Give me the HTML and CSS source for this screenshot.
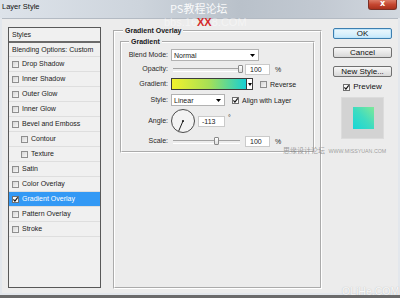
FILE: index.html
```html
<!DOCTYPE html>
<html>
<head>
<meta charset="utf-8">
<title>Layer Style</title>
<link rel="stylesheet" href="styles.css">
</head>
<body>
<div class="window">
  <div class="titlebar">
    <span class="title">Layer Style</span>
    <span class="close">x</span>
  </div>
  <div class="dialog">
    <ul class="styles-list">
      <li class="head">Styles</li>
      <li class="blend">Blending Options: Custom</li>
      <li><span class="cb"></span>Drop Shadow</li>
      <li><span class="cb"></span>Inner Shadow</li>
      <li><span class="cb"></span>Outer Glow</li>
      <li><span class="cb"></span>Inner Glow</li>
      <li><span class="cb"></span>Bevel and Emboss</li>
      <li class="sub"><span class="cb"></span>Contour</li>
      <li class="sub"><span class="cb"></span>Texture</li>
      <li><span class="cb"></span>Satin</li>
      <li><span class="cb"></span>Color Overlay</li>
      <li class="sel"><span class="cb on"><svg width="5" height="5" viewBox="0 0 5 5"><path d="M0.4 2.4 L1.9 4.2 L4.7 0.4" fill="none" stroke="#111" stroke-width="1.1"/></svg></span>Gradient Overlay</li>
      <li><span class="cb"></span>Pattern Overlay</li>
      <li><span class="cb"></span>Stroke</li>
    </ul>

    <fieldset class="group outer">
      <legend>Gradient Overlay</legend>
      <fieldset class="group inner">
        <legend>Gradient</legend>
        <div class="form">
          <label>Blend Mode:</label>
          <div class="ctl">
            <div class="select wide"><span>Normal</span><svg width="5" height="3" viewBox="0 0 5 3"><path d="M0 0H5L2.5 3Z" fill="#000"/></svg></div>
          </div>

          <label>Opacity:</label>
          <div class="ctl">
            <div class="slider"><span class="thumb" style="left:65px"></span></div>
            <div class="num">100</div>
            <span class="unit">%</span>
          </div>

          <label>Gradient:</label>
          <div class="ctl">
            <div class="grad"><div class="grad-fill"></div><div class="grad-drop"><svg width="4" height="3" viewBox="0 0 4 3"><path d="M0 0H4L2 3Z" fill="#000"/></svg></div></div>
            <span class="cb"></span><span class="cb-label">Reverse</span>
          </div>

          <label>Style:</label>
          <div class="ctl">
            <div class="select narrow"><span>Linear</span><svg width="5" height="3" viewBox="0 0 5 3"><path d="M0 0H5L2.5 3Z" fill="#000"/></svg></div>
            <span class="cb on"><svg width="5" height="5" viewBox="0 0 5 5"><path d="M0.4 2.4 L1.9 4.2 L4.7 0.4" fill="none" stroke="#111" stroke-width="1.1"/></svg></span><span class="cb-label">Align with Layer</span>
          </div>

          <label>Angle:</label>
          <div class="ctl">
            <svg class="dial" width="24" height="24" viewBox="0 0 24 24">
              <circle cx="12" cy="12" r="11.5" fill="#f3f3f3" stroke="#4a4a4a"/>
              <line x1="12" y1="12" x2="7.6" y2="22.2" stroke="#222" stroke-width="1"/>
              <circle cx="12" cy="12" r="1" fill="#111"/>
            </svg>
            <div class="num angle">-113</div>
            <span class="deg">°</span>
          </div>

          <label>Scale:</label>
          <div class="ctl">
            <div class="slider"><span class="thumb" style="left:41px"></span></div>
            <div class="num">100</div>
            <span class="unit">%</span>
          </div>
        </div>
      </fieldset>
    </fieldset>

    <div class="side">
      <button class="btn default">OK</button>
      <button class="btn">Cancel</button>
      <button class="btn last">New Style...</button>
      <div class="preview-check"><span class="cb on"><svg width="5" height="5" viewBox="0 0 5 5"><path d="M0.4 2.4 L1.9 4.2 L4.7 0.4" fill="none" stroke="#111" stroke-width="1.1"/></svg></span><span>Preview</span></div>
      <div class="preview-box"><div class="preview-swatch"></div></div>
    </div>
  </div>

  <div class="wm-ps">PS教程论坛</div>
  <div class="wm-bbs">bbs.16<b>XX</b>8.COM</div>
  <div class="wm-missyuan">思缘设计论坛 <span>WWW.MISSYUAN.COM</span></div>
  <div class="wm-olihe">OLiHe.COM</div>
</div>
</body>
</html>
```

FILE: styles.css
```css
* { box-sizing: border-box; }

html, body { margin: 0; padding: 0; }

body {
  width: 400px;
  height: 298px;
  overflow: hidden;
  background: #6b6b6b;
  font-family: "Liberation Sans", Arial, sans-serif;
  font-size: 7px;
  color: #222;
}

.window {
  position: relative;
  width: 400px;
  height: 295px;
  background: #e3e7ec;
  display: flex;
  flex-direction: column;
}

.titlebar {
  height: 18px;
  flex: none;
  display: flex;
  align-items: flex-start;
  background: linear-gradient(90deg, #dde3ea 0%, #cdd4dc 35%, #b9c1ca 60%, #c2c9d2 80%, #d2d8df 100%);
}

.title {
  font-size: 7.5px;
  line-height: 14px;
  padding-left: 2px;
  color: #111;
}

.close {
  margin-left: auto;
  margin-right: 3px;
  width: 29px;
  height: 10px;
  background: linear-gradient(#dc7b66, #c54731 50%, #a9301c);
  border: 1px solid #7a3026;
  border-top: 0;
  border-radius: 0 0 3px 3px;
  color: #fff;
  font: bold 8px/8px "DejaVu Sans", sans-serif;
  text-align: center;
}

.dialog {
  height: 275px;
  flex: none;
  margin: 0 2px 2px;
  background: #ececec;
  border-top: 1px solid #b3bac3;
  display: flex;
  align-items: flex-start;
  padding: 7px 6px 0;
}

/* left list */
.styles-list {
  list-style: none;
  margin: 1px 12px 0 0;
  padding: 0;
  width: 93px;
  height: 261px;
  flex: none;
  border: 1px solid #585858;
  background: #f0f0f0;
}

.styles-list li {
  height: 15px;
  line-height: 14px;
  border-bottom: 1px solid #dedede;
  padding-left: 3px;
  display: flex;
  align-items: center;
  white-space: nowrap;
  color: #222;
}

.styles-list li.head {
  border-bottom: 2px solid #6a6a6a;
}

.styles-list li.blend {
  height: 14px;
  line-height: 13px;
}

.styles-list li.sub { padding-left: 12px; }

.styles-list li.sel {
  background: #3399f5;
  color: #fff;
}

.cb {
  width: 7px;
  height: 7px;
  flex: none;
  border: 1px solid #8e8e8e;
  background: linear-gradient(135deg, #d6d6d6, #f7f7f7);
  margin-right: 3px;
  display: flex;
  align-items: center;
  justify-content: center;
}

.cb.on { background: #fbfbfb; border-color: #6f6f6f; }
.cb svg { display: block; }

/* group boxes */
.group {
  margin: 0;
  min-width: 0;
  border: 2px groove #ffffff;
}

.group legend {
  font-weight: bold;
  line-height: 10px;
  padding: 0 2px;
  color: #1a1a1a;
}

.outer {
  width: 209px;
  height: 263px;
  flex: none;
  margin: 0 11px 0 0;
  padding: 1px 5px 0;
}

.outer > legend { margin-left: 3px; }

.inner {
  width: 195px;
  padding: 0;
}

.inner > legend { margin-left: 7px; }

.form {
  display: grid;
  grid-template-columns: 46px auto;
  grid-template-rows: 12px 12px 14px 14px 24px 12px;
  row-gap: 2px;
  column-gap: 3px;
  padding: 2px 0 4px;
}

.form label {
  text-align: right;
  align-self: center;
  line-height: 8px;
  color: #2a2a2a;
  white-space: nowrap;
}

.ctl {
  display: flex;
  align-items: center;
  white-space: nowrap;
}

.select {
  height: 12px;
  border: 1px solid #b2b2b2;
  background: #fff;
  display: flex;
  align-items: center;
  justify-content: space-between;
  padding: 0 3px 0 2px;
  color: #1a1a1a;
}

.select.wide { width: 88px; }
.select.narrow { width: 54px; margin-right: 7px; }

.slider {
  position: relative;
  width: 67px;
  height: 12px;
  margin: 0 5px 0 2px;
}

.slider::before {
  content: "";
  position: absolute;
  left: 0;
  right: 0;
  top: 5px;
  height: 2px;
  border-top: 1px solid #a3a3a3;
  border-bottom: 1px solid #fff;
}

.thumb {
  position: absolute;
  top: 2px;
  width: 5px;
  height: 8px;
  border: 1px solid #8a8a8a;
  border-radius: 1px;
  background: linear-gradient(#ffffff, #dedede);
}

.num {
  width: 25px;
  height: 11px;
  background: #fff;
  border: 1px solid #cacaca;
  padding-left: 4px;
  line-height: 9px;
  margin-right: 5px;
  color: #1a1a1a;
}

.num.angle {
  width: 27px;
  padding-left: 3px;
  margin-right: 3px;
}

.unit { color: #2a2a2a; }

.deg {
  align-self: flex-start;
  margin-top: 5px;
  line-height: 8px;
}

.dial { display: block; margin-right: 3px; flex: none; }

.grad {
  width: 82px;
  height: 12px;
  border: 1px solid #3c3c3c;
  display: flex;
  margin-right: 7px;
}

.grad-fill {
  flex: 1;
  background: linear-gradient(90deg, #f2f12c 0%, #a6df56 50%, #16cfd4 100%);
}

.grad-drop {
  width: 6px;
  border-left: 1px solid #3c3c3c;
  background: #fff;
  display: flex;
  align-items: center;
  justify-content: center;
}

.cb-label { color: #222; }

/* right column */
.side {
  width: 59px;
  flex: none;
  margin-top: 2px;
  display: flex;
  flex-direction: column;
  align-items: center;
}

.btn {
  width: 59px;
  height: 11px;
  font: 8px/9px "Liberation Sans", Arial, sans-serif;
  border: 1px solid #707070;
  border-radius: 2px;
  background: linear-gradient(#f7f7f7, #e8e8e8 50%, #d8d8d8);
  padding: 0;
  margin: 0 0 8px;
  color: #111;
}

.btn.default {
  border-color: #3c7fb1;
  box-shadow: inset 0 0 0 1px #bfe4f9;
  background: linear-gradient(#ecf7fd, #dcf1fc 50%, #c4e8fc);
}

.btn.last { margin-bottom: 6px; }

.preview-check {
  height: 8px;
  display: flex;
  align-items: center;
  font-size: 8px;
  line-height: 8px;
  margin-bottom: 6px;
  color: #111;
}

.preview-box {
  width: 43px;
  height: 42px;
  background: #d3d3d3;
  border: 1px solid #dcdcdc;
  display: flex;
  align-items: center;
  justify-content: center;
  padding-left: 2px;
}

.preview-swatch {
  width: 21px;
  height: 22px;
  background: linear-gradient(to top right, #16d6d8 0%, #3fdcc0 50%, #7fe898 100%);
}

/* watermarks (overlays) */
.wm-ps {
  position: absolute;
  left: 170px;
  top: 2px;
  font: 11px/13px "Noto Sans CJK SC", sans-serif;
  color: rgba(255, 255, 255, 0.92);
}

.wm-bbs {
  position: absolute;
  left: 164px;
  top: 17px;
  font: 11px/11px "Liberation Sans", Arial, sans-serif;
  color: rgba(255, 255, 255, 0.45);
}

.wm-bbs b { color: #d42a2a; }

.wm-missyuan {
  position: absolute;
  left: 283px;
  top: 146px;
  font: 7px/8px "Noto Sans CJK SC", sans-serif;
  color: rgba(120, 120, 120, 0.7);
  white-space: nowrap;
}

.wm-missyuan span {
  font: 5.3px/8px "Liberation Sans", Arial, sans-serif;
  margin-left: 2px;
}

.wm-olihe {
  position: absolute;
  left: 342px;
  top: 286px;
  font: 10.5px/10px "Liberation Sans", Arial, sans-serif;
  color: rgba(255, 255, 255, 0.92);
  text-shadow: 0 0 1px rgba(120, 120, 120, 0.5);
}
```
